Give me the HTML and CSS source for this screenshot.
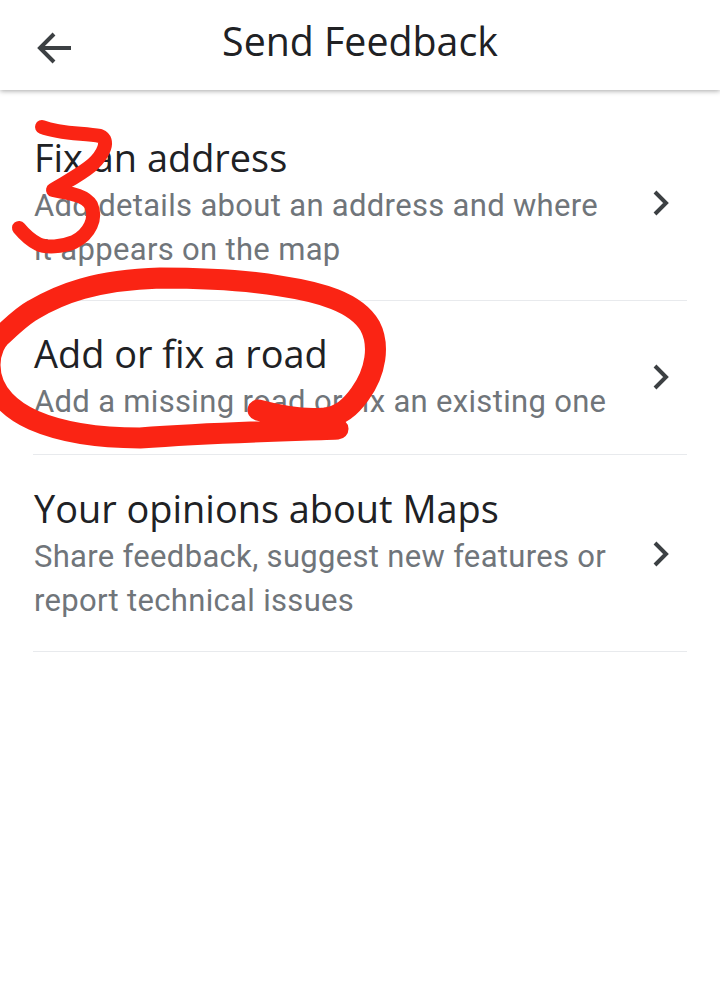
FILE: index.html
```html
<!DOCTYPE html>
<html lang="en">
<head>
  <meta charset="UTF-8" />
  <meta name="viewport" content="width=device-width, initial-scale=1.0"/>
  <title>Send Feedback</title>
  <link rel="stylesheet" href="styles.css">
</head>
<body>
  <header class="topbar">
    <svg class="back" viewBox="0 0 36 36" width="36" height="36">
      <path d="M35 18H4M18 4 4 18l14 14" fill="none" stroke="#3c4043" stroke-width="4"/>
    </svg>
    <h1>Send Feedback</h1>
  </header>

  <ul class="list">
    <li class="row">
      <div class="text">
        <div class="title">Fix an address</div>
        <div class="sub">Add details about an address and where it appears on the map</div>
      </div>
      <svg class="chevron" viewBox="0 0 16 26" width="16" height="26"><path d="M2 2l11 11L2 24" fill="none" stroke="#3c4043" stroke-width="4"/></svg>
    </li>
    <li class="row">
      <div class="text">
        <div class="title">Add or fix a road</div>
        <div class="sub">Add a missing road or fix an existing one</div>
      </div>
      <svg class="chevron" viewBox="0 0 16 26" width="16" height="26"><path d="M2 2l11 11L2 24" fill="none" stroke="#3c4043" stroke-width="4"/></svg>
    </li>
    <li class="row">
      <div class="text">
        <div class="title">Your opinions about Maps</div>
        <div class="sub">Share feedback, suggest new features or report technical issues</div>
      </div>
      <svg class="chevron" viewBox="0 0 16 26" width="16" height="26"><path d="M2 2l11 11L2 24" fill="none" stroke="#3c4043" stroke-width="4"/></svg>
    </li>
  </ul>

  <!-- red marker scribbles drawn on top of the list -->
  <svg class="marker" viewBox="0 0 720 982" width="720" height="982">
    <path class="three" d="M42 127C60 134 82 133 100 136C110 140 104 154 92 165C80 175 66 182 53 190C66 193 84 194 91 205C97 218 90 234 74 242C62 247 46 248 38 244C30 240 24 234 19 228"/>
    <path class="oval" d="M338 429C290 431 220 432 140 438C105 438 65 434 33 420C15 412 -10 395 -10 365C-10 350 -3 340 0 337C12 326 22 316 33 310C60 294 95 280 160 278C205 278 245 280 280 286C320 292 356 302 370 326C380 345 376 372 360 394C350 408 340 416 325 418C305 420 280 416 258 410"/>
  </svg>
</body>
</html>
```

FILE: styles.css
```css
body {
  margin: 0;
  background: #fff;
  font-family: Roboto, sans-serif;
  position: relative;
  overflow: hidden;
  height: 982px;
}

.topbar {
  height: 90px;
  display: flex;
  align-items: center;
  justify-content: center;
  position: relative;
  box-shadow: 0 1px 5px rgba(0,0,0,0.35);
}

.topbar h1 {
  margin: 0 0 8px;
  font-family: "Open Sans", sans-serif;
  font-size: 39.3px;
  font-weight: 400;
  color: #202124;
}

.back {
  position: absolute;
  left: 36px;
  top: 30px;
}

.list {
  list-style: none;
  margin: 0;
  padding: 1px 33px 0;
}

.row {
  display: flex;
  align-items: center;
  justify-content: space-between;
  padding: 27px 0 28px 1px;
  border-bottom: 1px solid #e8eaed;
}

.row:nth-child(1) {
  padding-top: 40px;
}

.row:nth-child(2) {
  padding: 26px 0 30px 1px;
}

.text {
  width: 580px;
}

.title {
  font-family: "Open Sans", sans-serif;
  font-size: 37.9px;
  line-height: 53px;
  color: #202124;
}

.sub {
  font-size: 31px;
  letter-spacing: 0.32px;
  line-height: 44px;
  color: #70757a;
}

.chevron {
  margin-right: 18px;
  margin-top: 2px;
}

.marker {
  position: absolute;
  left: 0;
  top: 0;
  fill: none;
  stroke: #fa2414;
  stroke-linecap: round;
  stroke-linejoin: round;
}

.three {
  stroke-width: 14;
}

.oval {
  stroke-width: 21;
}
```
